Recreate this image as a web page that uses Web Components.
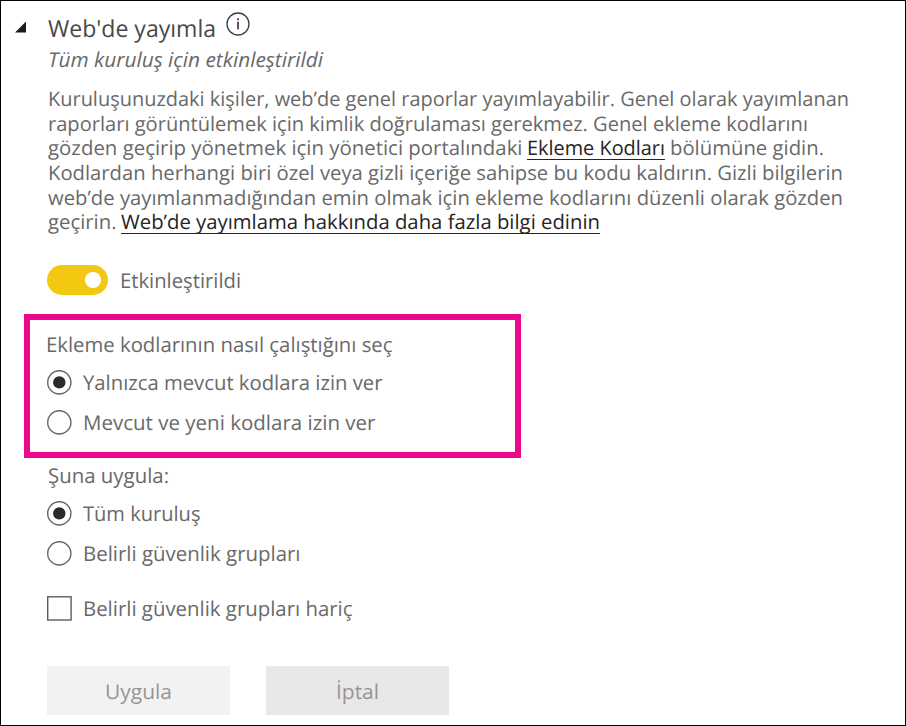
<!DOCTYPE html>
<html lang="tr">
<head>
<meta charset="utf-8">
<title>Web'de yayımla</title>
<style>
html,body{margin:0;padding:0;background:#fff}
body{font-family:"Open Sans","Noto Sans",sans-serif;font-size:20.4px;color:#696969;text-rendering:geometricPrecision}
</style>
</head>
<body>
<tenant-setting></tenant-setting>
<script>
const define = (name, html, after) => customElements.define(name, class extends HTMLElement {
  connectedCallback() {
    if (this.shadowRoot) return;
    const t = document.createElement('template');
    t.innerHTML = html;
    this.attachShadow({mode: 'open'}).append(t.content.cloneNode(true));
    if (after) after(this);
  }
});

// Text condensed horizontally to fill the width given in "w".
define('fit-text', `<style>
:host{display:inline-block;white-space:nowrap;flex:none}
span{display:inline-block;transform-origin:0 50%}
</style><span><slot></slot></span>`, el => {
  const s = el.shadowRoot.querySelector('span');
  const w = +el.getAttribute('w');
  el.style.width = w + 'px';
  const n = s.getBoundingClientRect().width;
  if (n) s.style.transform = 'scaleX(' + (w / n) + ')';
});

define('info-icon', `<style>:host{display:block;width:26px;height:26px}svg{display:block}</style>
<svg width="26" height="26" viewBox="0 0 26 26"><circle cx="13" cy="13" r="11" fill="none" stroke="#3c3c44" stroke-width="1.3"/>
<rect x="12.2" y="10.7" width="1.7" height="7.6" fill="#4b2c50"/><rect x="12.1" y="7.4" width="1.9" height="1.8" fill="#4b2c50"/></svg>`);

define('toggle-switch', `<style>
:host{display:flex;align-items:center;height:31px}
i{box-sizing:border-box;display:flex;align-items:center;justify-content:flex-end;width:61px;height:30.5px;border-radius:16px;background:#f2c811;padding-right:7.5px;margin-right:12px}
b{width:15.6px;height:15.6px;border-radius:50%;background:#fff}
</style><i><b></b></i><slot></slot>`);

define('option-row', `<style>
:host{display:flex;align-items:center;height:40px}
svg{display:block;margin-right:11px;flex:none}
.dot,.box{display:none}
:host([checked]) .dot{display:block}
:host([kind=check]) .ring{display:none}
:host([kind=check]) .box{display:block}
</style><svg width="25" height="25" viewBox="0 0 25 25"><circle class="ring" cx="12.3" cy="12.4" r="11.6" fill="none" stroke="#666" stroke-width="1.4"/><circle class="dot" cx="12.3" cy="12.4" r="6.2" fill="#2b2b2b"/><rect class="box" x=".7" y=".8" width="23.4" height="23.2" fill="none" stroke="#5c5c5c" stroke-width="1.4"/></svg><slot></slot>`);

define('action-button', `<style>
:host{display:flex;align-items:center;justify-content:center;width:183px;height:49px;background:var(--bg);color:#979593}
</style><slot></slot>`);

define('highlight-box', `<style>
:host{display:block;box-sizing:border-box;width:497px;height:144px;border:6px solid #ec098d;padding:12px 0 0 17px}
</style><slot></slot>`);

define('tenant-setting', `<style>
:host{display:block;box-sizing:border-box;width:906px;height:726px;border:1px solid #000;background:#fff;overflow:hidden}
.row{display:flex;align-items:center}
.title{height:31px;margin-top:11px;padding-left:13.5px;font-size:23.5px;color:#484848}
.title .tri{width:12px;height:12px;margin:-1px 21px 0 0}
.title info-icon{margin:-7px 0 0 9.5px}
.sub{height:24px;margin:4px 0 0 47px;font-style:italic}
.para{margin:16px 0 0 46.5px;display:grid;grid-auto-rows:24.6px;line-height:24px;font-size:20px}
a{color:#252423;display:block;height:24px;box-sizing:border-box;border-bottom:1.5px solid #252423}
.on{margin:30px 0 0 46px}
highlight-box{margin:18.5px 0 0 23px}
.head{margin:0 0 6px -1px;height:24px;line-height:24px}
.rest{margin-left:46px}
.cap{height:24px;margin:5px 0 6px .5px;line-height:24px}
.check{margin-top:15px}
.btns{display:flex;gap:36px;margin:38px 0 0 46px}
</style>
<div class="row title"><svg class="tri" viewBox="0 0 12 12"><path d="M0 11.5H11V.5Z" fill="#1c1a22"/></svg><fit-text w="168">Web'de yayımla</fit-text><info-icon></info-icon></div>
<div class="row sub"><fit-text w="275">Tüm kuruluş için etkinleştirildi</fit-text></div>
<div class="para">
<div class="row"><fit-text w="801">Kuruluşunuzdaki kişiler, web’de genel raporlar yayımlayabilir. Genel olarak yayımlanan</fit-text></div>
<div class="row"><fit-text w="760">raporları görüntülemek için kimlik doğrulaması gerekmez. Genel ekleme kodlarını</fit-text></div>
<div class="row"><fit-text w="474.5" style="margin-right:5px">gözden geçirip yönetmek için yönetici portalındaki</fit-text><a><fit-text w="138">Ekleme Kodları</fit-text></a><fit-text w="154" style="margin-left:5px">bölümüne gidin.</fit-text></div>
<div class="row"><fit-text w="795">Kodlardan herhangi biri özel veya gizli içeriğe sahipse bu kodu kaldırın. Gizli bilgilerin</fit-text></div>
<div class="row"><fit-text w="795">web’de yayımlanmadığından emin olmak için ekleme kodlarını düzenli olarak gözden</fit-text></div>
<div class="row"><fit-text w="68.5" style="margin-right:5px">geçirin.</fit-text><a><fit-text w="479">Web’de yayımlama hakkında daha fazla bilgi edinin</fit-text></a></div>
</div>
<toggle-switch class="on"><fit-text w="121">Etkinleştirildi</fit-text></toggle-switch>
<highlight-box>
<div class="head"><fit-text w="346.5">Ekleme kodlarının nasıl çalıştığını seç</fit-text></div>
<option-row checked><fit-text w="299.5">Yalnızca mevcut kodlara izin ver</fit-text></option-row>
<option-row><fit-text w="292.5">Mevcut ve yeni kodlara izin ver</fit-text></option-row>
</highlight-box>
<div class="rest">
<div class="cap"><fit-text w="121">Şuna uygula:</fit-text></div>
<option-row checked><fit-text w="117.5">Tüm kuruluş</fit-text></option-row>
<option-row><fit-text w="217.5">Belirli güvenlik grupları</fit-text></option-row>
<option-row kind="check" class="check"><fit-text w="269.5">Belirli güvenlik grupları hariç</fit-text></option-row>
</div>
<div class="btns">
<action-button style="--bg:#f3f2f2"><fit-text w="67">Uygula</fit-text></action-button>
<action-button style="--bg:#e9e8e8"><fit-text w="43">İptal</fit-text></action-button>
</div>`);
</script>
</body>
</html>
